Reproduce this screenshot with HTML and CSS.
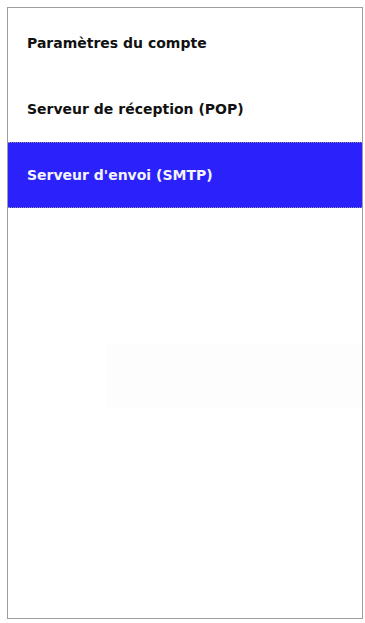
FILE: index.html
```html
<!DOCTYPE html>
<html lang="fr">
<head>
<meta charset="utf-8">
<link rel="stylesheet" href="styles.css">
</head>
<body>
<div class="panel">
  <ul class="menu">
    <li class="item">Paramètres du compte</li>
    <li class="item">Serveur de réception (POP)</li>
    <li class="item selected">Serveur d'envoi (SMTP)</li>
  </ul>
  <div class="ghost"></div>
</div>
</body>
</html>
```
FILE: styles.css
```css
html, body {
  margin: 0;
  padding: 0;
  background: #ffffff;
}
body {
  padding: 7px 2px 4px 7px;
  font-family: "DejaVu Sans", "Liberation Sans", sans-serif;
}
.panel {
  box-sizing: border-box;
  width: 356px;
  height: 612px;
  border: 1px solid #9a9ea3;
  background: #ffffff;
  padding-top: 2px;
  display: flex;
  flex-direction: column;
}
.menu {
  list-style: none;
  margin: 0;
  padding: 0;
}
.item {
  box-sizing: border-box;
  height: 66px;
  display: flex;
  align-items: center;
  padding-left: 19px;
  font-size: 14px;
  font-weight: bold;
  color: #111111;
}
.item.selected {
  background: #2b22fb;
  color: #f4f4ff;
  border-top: 1px dotted #8888aa;
  border-bottom: 1px dotted #8888aa;
}
.ghost {
  margin-top: 135px;
  margin-left: 99px;
  height: 65px;
  background: #fdfdfd;
}
```
